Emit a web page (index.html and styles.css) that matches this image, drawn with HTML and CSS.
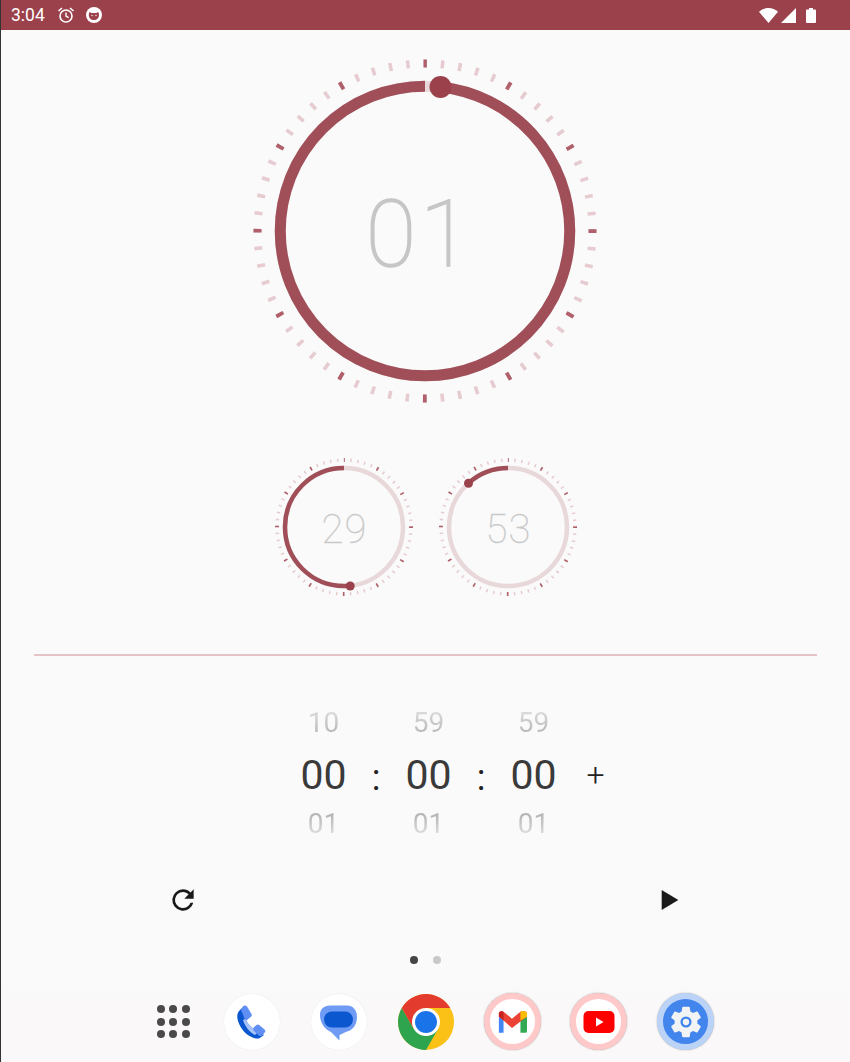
FILE: index.html
```html
<!DOCTYPE html>
<html lang="en">
<head>
<meta charset="utf-8">
<title>Timer</title>
<link rel="stylesheet" href="styles.css">
</head>
<body>
<div class="screen">
  <header class="statusbar">
    <div class="status-left">
      <span class="clock">3:04</span>
      <svg class="st-ic" width="18" height="18" viewBox="0 0 18 18"><circle cx="9" cy="10" r="6" fill="none" stroke="#fff" stroke-width="1.6"/><path d="M9 6.500V10l2.600 1.600" fill="none" stroke="#fff" stroke-width="1.4"/><path d="M1.500 5 5 2M16.500 5 13 2" stroke="#fff" stroke-width="1.6" fill="none"/></svg>
      <svg class="st-ic" width="18" height="18" viewBox="0 0 18 18"><circle cx="9" cy="9" r="8" fill="#fff"/><path d="M3.800 9c0-1 .4-2.400.9-3l1.800 1.100h4.800l1.800-1.100c.5.6.9 2 .9 3 0 3-2.200 5-5.100 5S3.800 12 3.800 9z" fill="#9b414b"/><circle cx="7" cy="9.500" r=".7" fill="#fff"/><circle cx="11" cy="9.500" r=".7" fill="#fff"/></svg>
    </div>
    <div class="status-right">
      <svg width="19" height="15" viewBox="0 0 19 15"><path d="M0 3.800C2.500 1.400 5.800 0 9.500 0s7 1.400 9.500 3.800L9.500 15z" fill="#fff"/></svg>
      <svg width="16" height="15" viewBox="0 0 16 15"><path d="M16 0v15H1z" fill="#fff"/></svg>
      <svg class="batt" width="10" height="15" viewBox="0 0 10 15"><path d="M3 0h4v1.500h2a1 1 0 0 1 1 1V14a1 1 0 0 1-1 1H1a1 1 0 0 1-1-1V2.500a1 1 0 0 1 1-1h2z" fill="#fff"/></svg>
    </div>
  </header>

  <main class="content">
    <section class="big-dial">
      <svg width="350" height="350" viewBox="0 0 350 350">
        <circle class="t-minor" cx="175" cy="175" r="167.500" stroke-width="8" stroke-dasharray="3.600 13.940" stroke-dashoffset="1.800" transform="rotate(-90 175 175)"/>
        <circle class="t-major" cx="175" cy="175" r="167.500" stroke-width="8" stroke-dasharray="3.800 83.900" stroke-dashoffset="1.900" transform="rotate(-90 175 175)"/>
        <circle class="track" cx="175" cy="175" r="144.750" stroke-width="11"/>
        <circle class="arc" cx="175" cy="175" r="144.750" stroke-width="11" pathLength="360" stroke-dasharray="354 6" stroke-dashoffset="-6" transform="rotate(-90 175 175)"/>
        <circle class="dot" cx="190.500" cy="31" r="11"/>
        <text class="big-num" x="170" y="178">01</text>
      </svg>
    </section>

    <section class="small-dials">
      <svg width="150" height="150" viewBox="0 0 150 150">
        <circle class="t-minor" cx="75" cy="75" r="67" stroke-width="3.400" stroke-dasharray="1.500 5.516" stroke-dashoffset=".75" transform="rotate(-90 75 75)"/>
        <circle class="t-major" cx="75" cy="75" r="67" stroke-width="4" stroke-dasharray="1.600 33.480" stroke-dashoffset=".8" transform="rotate(-90 75 75)"/>
        <circle class="track" cx="75" cy="75" r="59" stroke-width="4.500"/>
        <circle class="arc" cx="75" cy="75" r="59" stroke-width="4.500" pathLength="360" stroke-dasharray="186 174" stroke-dashoffset="-174" transform="rotate(-90 75 75)"/>
        <circle class="dot" cx="81.200" cy="134" r="4.500"/>
        <text class="small-num" x="75.500" y="77">29</text>
      </svg>
      <svg width="150" height="150" viewBox="0 0 150 150">
        <circle class="t-minor" cx="75" cy="75" r="67" stroke-width="3.400" stroke-dasharray="1.500 5.516" stroke-dashoffset=".75" transform="rotate(-90 75 75)"/>
        <circle class="t-major" cx="75" cy="75" r="67" stroke-width="4" stroke-dasharray="1.600 33.480" stroke-dashoffset=".8" transform="rotate(-90 75 75)"/>
        <circle class="track" cx="75" cy="75" r="59" stroke-width="4.500"/>
        <circle class="arc" cx="75" cy="75" r="59" stroke-width="4.500" pathLength="360" stroke-dasharray="42 318" stroke-dashoffset="-318" transform="rotate(-90 75 75)"/>
        <circle class="dot" cx="35.500" cy="31.200" r="4.500"/>
        <text class="small-num" x="75.500" y="77">53</text>
      </svg>
    </section>

    <hr class="divider">

    <section class="picker">
      <div class="col">
        <span class="side top">10</span><span class="cur">00</span><span class="side bot">01</span>
      </div>
      <span class="colon">:</span>
      <div class="col">
        <span class="side top">59</span><span class="cur">00</span><span class="side bot">01</span>
      </div>
      <span class="colon">:</span>
      <div class="col">
        <span class="side top">59</span><span class="cur">00</span><span class="side bot">01</span>
      </div>
      <span class="plus">+</span>
    </section>

    <section class="controls">
      <svg width="32" height="32" viewBox="0 0 24 24"><path d="M17.650 6.350A7.958 7.958 0 0 0 12 4a8 8 0 1 0 7.730 10h-2.080A6 6 0 1 1 12 6c1.660 0 3.140.69 4.220 1.780L13 11h7V4z" fill="#1a1a1a"/></svg>
      <svg width="32" height="32" viewBox="0 0 24 24"><path d="M5 4.500v15L17.500 12z" fill="#1a1a1a"/></svg>
    </section>

    <div class="pager"><span class="pg on"></span><span class="pg"></span></div>
  </main>

  <footer class="dock">
    <div class="slot">
      <div class="apps">
        <i></i><i></i><i></i><i></i><i></i><i></i><i></i><i></i><i></i>
      </div>
    </div>
    <div class="slot"><div class="disc plain">
      <svg width="56" height="56" viewBox="0 0 56 56">
        <path d="M19 13 15 17C12 21 13 27 17 33.500 21 40 28 45 35 44.500L40 41 31 35C27 34 22 28 21 23z" fill="#0b57d0"/>
        <path d="M19 12.500c1-1.500 3-1.500 4 0l4.500 7.500c.7 1.200.3 2-.5 2.800L23 26c-1 .5-2 0-2.500-1.500L17 16z" fill="#5f8ff5"/>
        <path d="M21 25c2 3.500 5 7.500 9.500 10.500L34 38l-3 3c-6-3-10-9-12-15z" fill="#a8c3f7"/>
        <path d="M30 33l2.500-2c1-.7 2-.7 3 .2l5 4.300c1.200 1 1 2.300 0 3.300L37.500 42c-1 .7-2 .2-3-.7L30 37c-1-1-1-3 0-4z" fill="#5f8ff5"/>
      </svg>
    </div></div>
    <div class="slot"><div class="disc plain">
      <svg width="56" height="56" viewBox="0 0 56 56">
        <path d="M19 11.500H36C42 11.500 46 16 46 23 46 32 40 37 36 37.500L28.500 41V46.500L20 38C13 35 9 28 9 21 9 15 13 11.500 19 11.500Z" fill="#6f9bf5"/>
        <rect x="13" y="17.500" width="29" height="16" rx="8" fill="#0b57d0"/>
      </svg>
    </div></div>
    <div class="slot">
      <svg width="56" height="56" viewBox="0 0 56 56">
        <circle cx="28" cy="28" r="28" fill="#fbc116"/>
        <path d="M15.900 35 3.800 14A28 28 0 0 0 28 56L40.100 35Z" fill="#2fa44f"/>
        <path d="M15.900 35 3.800 14A28 28 0 0 1 52.200 14H28Z" fill="#e33b2e"/>
        <circle cx="28" cy="28" r="14" fill="#fff"/>
        <circle cx="28" cy="28" r="11" fill="#1a73e8"/>
      </svg>
    </div>
    <div class="slot"><div class="disc ring-red">
      <svg width="30" height="23" viewBox="0 0 32 24"><path d="M2 24h5V11L2 7z" fill="#4285f4"/><path d="M25 24h5a2 2 0 0 0 2-2V7l-7 4z" fill="#34a853"/><path d="M7 11 2 7V3.500C2 1 5 0 7 1.500L16 9l9-7.500C27 0 32 1 32 3.500V7l-7 5-9 7z" fill="#ea4335"/><path d="M2 3.500V7l5 4V2C5 0 2 1 2 3.500z" fill="#c5221f"/><path d="M25 1.500V11l7-4V3.500C32 1 27 0 25 1.500z" fill="#fbbc04"/></svg>
    </div></div>
    <div class="slot"><div class="disc ring-red">
      <svg width="32" height="24" viewBox="0 0 32 24"><rect x=".5" y="1" width="31" height="22" rx="5" fill="#f00"/><path d="M13 7.500v9l7.500-4.500z" fill="#fff"/></svg>
    </div></div>
    <div class="slot"><div class="disc ring-blue">
      <svg width="38" height="38" viewBox="0 0 24 24"><path d="M19.140 12.940c.04-.3.060-.61.060-.94 0-.32-.020-.64-.070-.94l2.030-1.580a.49.490 0 0 0 .12-.61l-1.920-3.320a.488.488 0 0 0-.59-.22l-2.390.96c-.5-.38-1.030-.7-1.620-.94l-.36-2.540a.484.484 0 0 0-.48-.41h-3.840c-.24 0-.43.170-.47.410l-.36 2.540c-.59.240-1.130.57-1.620.94l-2.390-.96c-.22-.08-.47 0-.59.220L2.740 8.870c-.12.210-.08.470.12.610l2.030 1.580c-.05.300-.09.630-.09.940s.02.640.07.940l-2.030 1.580a.49.490 0 0 0-.12.610l1.920 3.320c.12.220.37.290.59.220l2.390-.96c.5.380 1.030.7 1.620.94l.36 2.540c.05.240.24.410.48.410h3.840c.24 0 .44-.17.470-.41l.36-2.540c.59-.24 1.130-.56 1.620-.94l2.390.96c.22.080.47 0 .59-.22l1.920-3.320c.12-.22.07-.47-.12-.61zM12 15.500a3.500 3.500 0 1 1 0-7 3.500 3.500 0 0 1 0 7z" fill="#f1f3f4"/><circle cx="12" cy="12" r="2" fill="#f1f3f4"/></svg>
    </div></div>
  </footer>
</div>
</body>
</html>
```
FILE: styles.css
```css
* { box-sizing: border-box; }
html, body { margin: 0; padding: 0; height: 100%; }
body { background: #fafafa; font-family: Roboto, "Liberation Sans", sans-serif; overflow: hidden; }
.screen { width: 850px; height: 1062px; display: flex; flex-direction: column; border-left: 1px solid #333; background: #fafafa; }

.statusbar { height: 30px; flex: none; background: #9b414b; display: flex; justify-content: space-between; align-items: center; padding: 0 34.500px 0 10px; color: #fff; }
.status-left { display: flex; align-items: center; gap: 10px; }
.clock { font-size: 17.500px; width: 36px; }
.status-right { display: flex; align-items: center; gap: 2px; }
.batt { margin-left: 8px; }

.content { flex: 1; display: flex; flex-direction: column; align-items: center; min-height: 0; }
.big-dial { height: 350px; margin-top: 26px; margin-left: -1px; line-height: 0; }
.small-dials { display: flex; gap: 14px; margin-top: 46px; line-height: 0; }

.t-minor, .t-major, .track, .arc { fill: none; }
.t-minor { stroke: #e6ccd0; }
.t-major { stroke: #b0606b; }
.track { stroke: #e8d8da; }
.arc { stroke: #a04f59; }
.dot { fill: #9b414b; }
.big-num { font-family: Roboto, sans-serif; font-weight: 100; font-size: 92px; fill: #c6c6c6; stroke: #c6c6c6; stroke-width: 1.500px; text-anchor: middle; dominant-baseline: central; letter-spacing: 4px; }
.small-num { font-family: Roboto, sans-serif; font-weight: 100; font-size: 40px; fill: #c9c9c9; stroke: #c9c9c9; stroke-width: .3px; text-anchor: middle; dominant-baseline: central; letter-spacing: 1px; }

.divider { width: 783px; margin: 52px 0 0; border: 0; height: 2px; background: #e6c3c7; flex: none; }

.picker { display: flex; align-items: center; margin-top: 47px; margin-left: 58px; }
.col { width: 44px; display: flex; flex-direction: column; align-items: center; }
.cur { font-size: 41px; line-height: 56px; color: #3a3a3a; }
.side { font-size: 28px; line-height: 40px; color: transparent; background-clip: text; -webkit-background-clip: text; }
.top { margin-bottom: 4px; background-image: linear-gradient(to bottom, #e8e8e8, #a8a8a8); }
.bot { margin-top: 1px; background-image: linear-gradient(to bottom, #a0a0a0, #f0f0f0); }
.colon { width: 61px; margin-top: 8px; text-align: center; font-size: 36px; color: #222; line-height: 1; }
.plus { width: 24px; margin-left: 28px; margin-top: 2px; text-align: center; font-size: 32px; color: #222; line-height: 1; font-weight: 300; }

.controls { width: 520px; display: flex; justify-content: space-between; margin-top: 40px; line-height: 0; margin-left: 3px; }
.pager { display: flex; gap: 15px; margin-top: 40px; margin-left: -1px; }
.pg { width: 8px; height: 8px; border-radius: 50%; background: #c9c9c9; }
.pg.on { background: #444; }

.dock { flex: none; height: 84px; padding-bottom: 10.500px; background: linear-gradient(to bottom, #fafafa, #faf8f9 40%); display: flex; justify-content: center; align-items: flex-end; }
.slot { width: 86.700px; height: 60px; display: flex; align-items: center; justify-content: center; line-height: 0; }
.apps { width: 33px; display: grid; grid-template-columns: repeat(3, 8px); gap: 4.500px; margin-left: 16px; }
.apps i { width: 8px; height: 8px; border-radius: 50%; background: #4a4a4a; }
.disc { width: 56px; height: 56px; border-radius: 50%; display: flex; align-items: center; justify-content: center; }
.plain { background: #fff; box-shadow: 0 0 1px #ddd; }
.ring-red { background: #fff; border: 6px solid #ffc9c9; box-shadow: 0 0 1.500px #999; width: 57px; height: 57px; }
.ring-blue { background: #4285ed; border: 6px solid #bcd3f8; box-shadow: 0 0 1.500px #999; width: 57px; height: 57px; }
```
